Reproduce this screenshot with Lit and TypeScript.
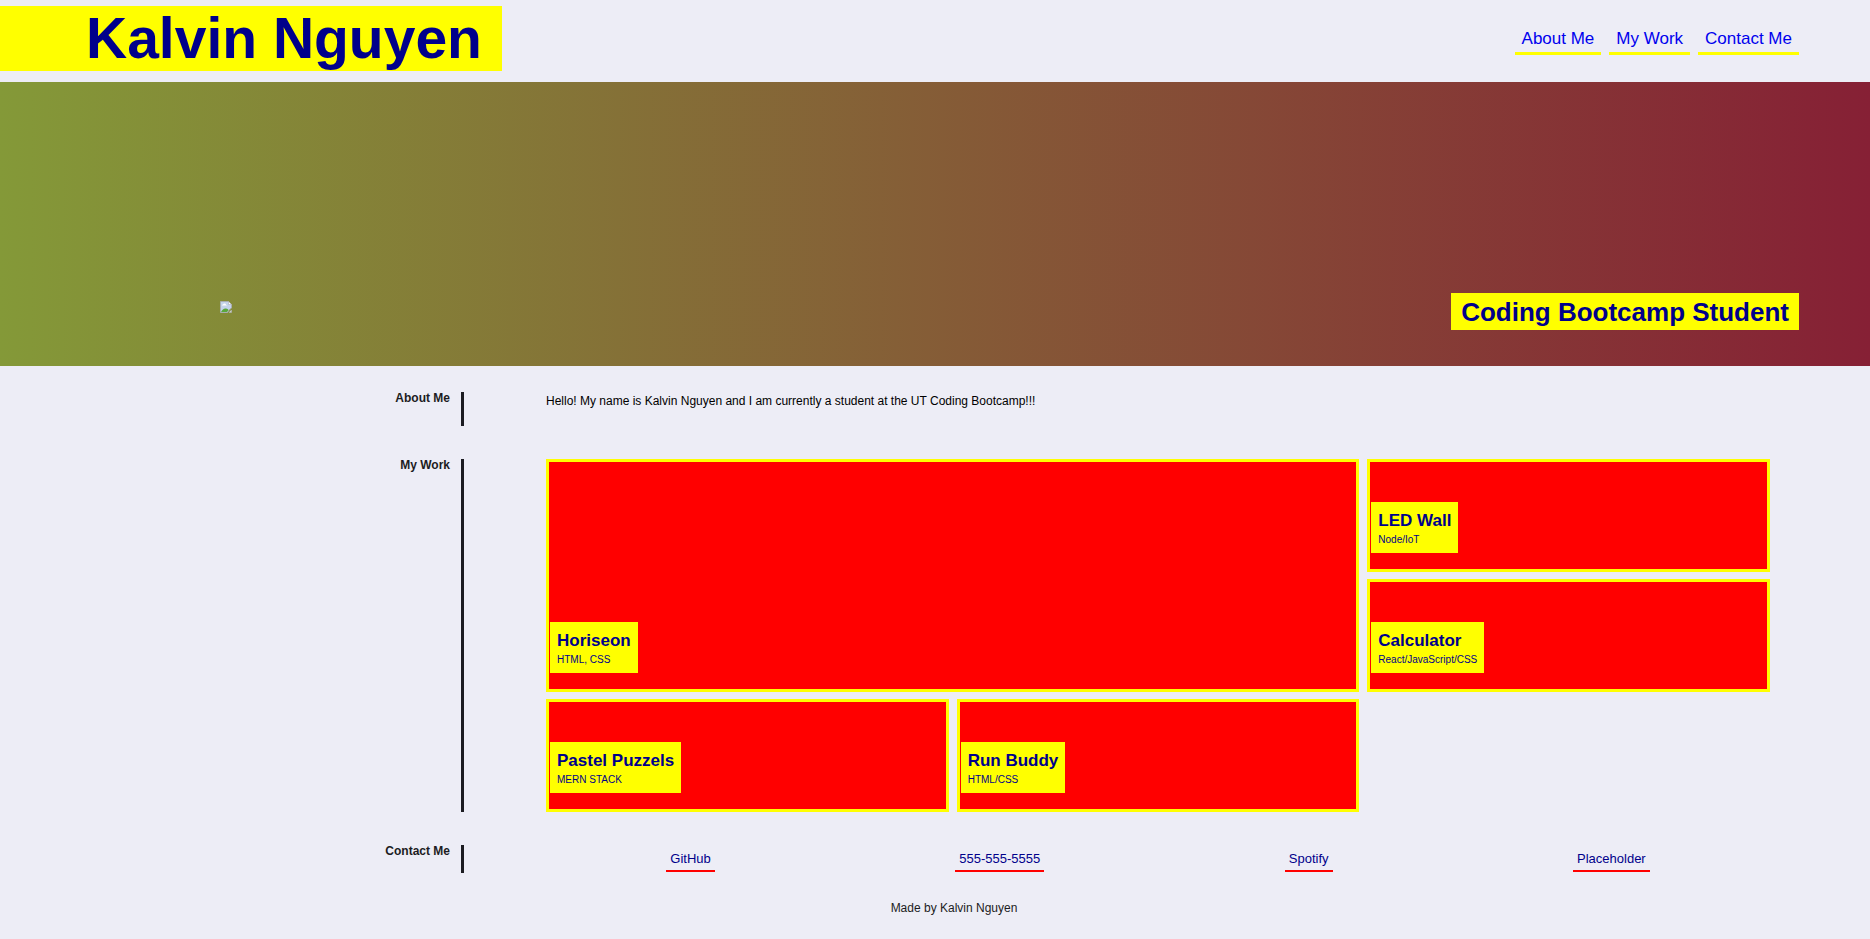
import { LitElement, html, css, svg } from "lit";
import { customElement } from "lit/decorators.js";

interface Project {
  title: string;
  stack: string;
  featured?: boolean;
}

const projects: Project[] = [
  { title: "Horiseon", stack: "HTML, CSS", featured: true },
  { title: "LED Wall", stack: "Node/IoT" },
  { title: "Calculator", stack: "React/JavaScript/CSS" },
  { title: "Pastel Puzzels", stack: "MERN STACK" },
  { title: "Run Buddy", stack: "HTML/CSS" },
];

const contacts = ["GitHub", "555-555-5555", "Spotify", "Placeholder"];

// Placeholder glyph for the portrait: a torn page with a landscape.
const missingPicture = svg`
  <path d="M1.500 1.500h8l3 3v3.500l-2.500 2-1.500 2.500h-7z" fill="#c4d3ea" stroke="#a9adb0"/>
  <path d="M3 5.500q0-1 1-1 .5-1.500 2-1 1 .2 1 1.200.8 0 .8.800z" fill="#fff"/>
  <path d="M2 12q2-4 5-3.500 2 .3 2.500 1.500l-1.500 2z" fill="#5aa83c"/>
  <path d="M9.500 1.500v3h3z" fill="#fff" stroke="#a9adb0" stroke-width=".6"/>
  <path d="M10 12.500l2.500-2.500v2.500z" fill="#dfe3e6" stroke="#a9adb0" stroke-width=".6"/>`;

@customElement("app-root")
export class AppRoot extends LitElement {
  static styles = css`
    :host {
      display: block;
      min-height: 100vh;
      background: #ededf6;
      color: #1c1c22;
      font-family: "Liberation Sans", Arial, sans-serif;
      font-size: 12px;
      line-height: 18px;
    }
    * {
      box-sizing: border-box;
      margin: 0;
    }
    a {
      text-decoration: none;
    }
    .header {
      display: flex;
      justify-content: space-between;
      align-items: flex-start;
      padding: 6px 71px 11px 0;
    }
    .name {
      padding: 0 20px 0 86px;
      background: #ffff00;
      color: #00008b;
      font-size: 57px;
      line-height: 65px;
    }
    .nav {
      display: flex;
      gap: 8px;
      padding-top: 23px;
    }
    .nav a {
      padding: 0 7px 3px;
      border-bottom: 3px solid #ffff00;
      color: #0000ee;
      font-size: 17px;
      line-height: 20px;
    }
    .hero {
      display: flex;
      justify-content: space-between;
      align-items: flex-end;
      height: 284px;
      padding: 0 71px 36px 219px;
      background: linear-gradient(to right, #849938, #862035);
    }
    .picture {
      width: 16px;
      height: 16px;
      margin-bottom: 14px;
    }
    .role {
      padding: 1px 10px 0;
      background: #ffff00;
      color: #00008b;
      font-size: 26px;
      line-height: 36px;
    }
    .main {
      display: grid;
      gap: 33px;
      padding: 26px 100px 0 0;
    }
    .section {
      display: grid;
      grid-template-columns: 464px 1fr;
      column-gap: 82px;
    }
    .label {
      padding-right: 11px;
      border-right: 3px solid #1c1c22;
      font-size: 12px;
      line-height: 12px;
      text-align: right;
    }
    .about {
      padding-bottom: 16px;
      color: #000;
    }
    .work {
      display: grid;
      grid-template-columns: repeat(3, 1fr);
      grid-auto-rows: 113px;
      gap: 7px 8px;
    }
    .card {
      display: flex;
      align-items: flex-end;
      padding: 0 0 16px 1px;
      border: 3px solid #ffff00;
      background: #ff0000;
      color: #00008b;
    }
    .featured {
      grid-column: span 2;
      grid-row: span 2;
    }
    .caption {
      padding: 9px 7px 5px;
      background: #ffff00;
    }
    .title {
      font-size: 17px;
      line-height: 20px;
    }
    .stack {
      font-size: 10px;
      line-height: 17px;
    }
    .contacts {
      display: flex;
      justify-content: space-around;
      padding: 6px 0 1px;
    }
    .contacts a {
      padding: 0 4px 3px;
      border-bottom: 2px solid #ff0000;
      color: #00008b;
      font-size: 13px;
      line-height: 16px;
    }
    .footer {
      padding: 26px 0 22px 38px;
      text-align: center;
    }
  `;

  render() {
    return html`
      <header class="header">
        <h1 class="name">Kalvin Nguyen</h1>
        <nav class="nav">
          <a href="#about">About Me</a>
          <a href="#work">My Work</a>
          <a href="#contact">Contact Me</a>
        </nav>
      </header>
      <div class="hero">
        <svg class="picture" viewBox="0 0 16 16" aria-hidden="true">${missingPicture}</svg>
        <h2 class="role">Coding Bootcamp Student</h2>
      </div>
      <main class="main">
        <section class="section" id="about">
          <h3 class="label">About Me</h3>
          <p class="about">
            Hello! My name is Kalvin Nguyen and I am currently a student at the UT Coding Bootcamp!!!
          </p>
        </section>
        <section class="section" id="work">
          <h3 class="label">My Work</h3>
          <div class="work">
            ${projects.map(
              (p) => html`
                <a class="card ${p.featured ? "featured" : ""}" href="#work">
                  <div class="caption">
                    <h4 class="title">${p.title}</h4>
                    <p class="stack">${p.stack}</p>
                  </div>
                </a>
              `
            )}
          </div>
        </section>
        <section class="section" id="contact">
          <h3 class="label">Contact Me</h3>
          <div class="contacts">
            ${contacts.map((c) => html`<a href="#contact">${c}</a>`)}
          </div>
        </section>
      </main>
      <footer class="footer">Made by Kalvin Nguyen</footer>
    `;
  }
}
